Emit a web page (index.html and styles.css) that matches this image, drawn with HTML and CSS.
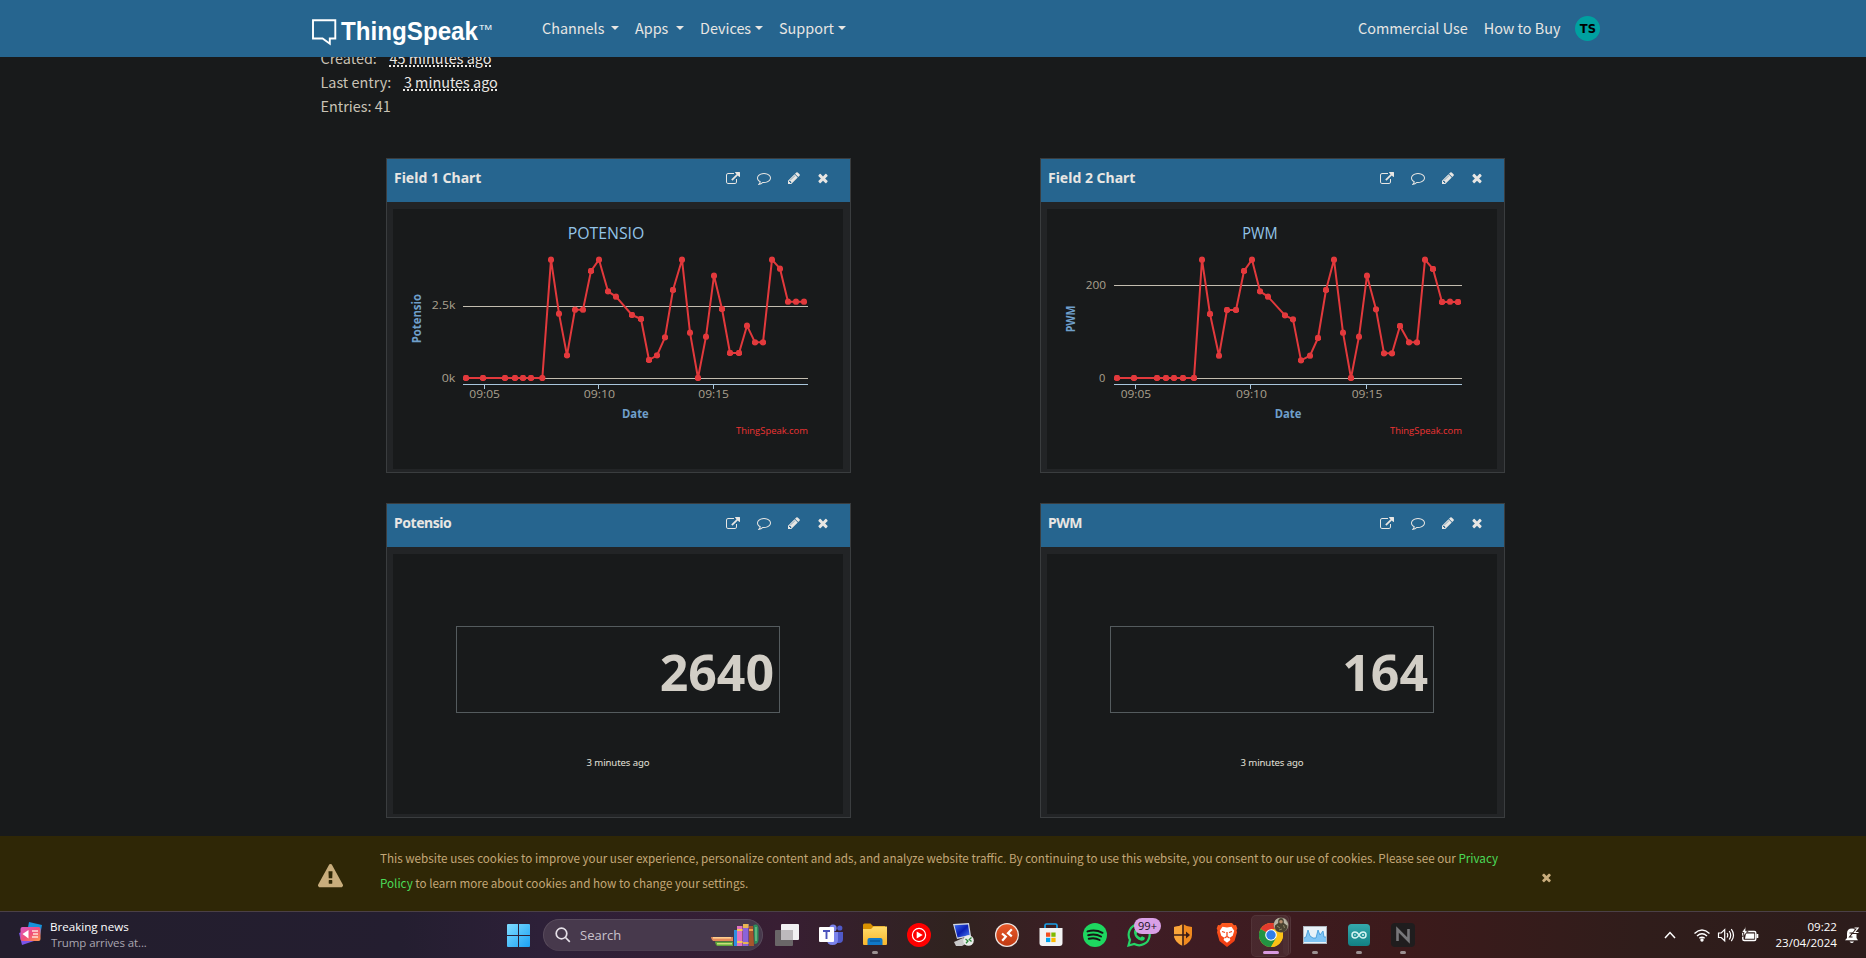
FILE: index.html
```html
<!DOCTYPE html>
<html lang="en">
<head>
<meta charset="utf-8">
<title>ThingSpeak</title>
<link rel="stylesheet" href="styles.css">
</head>
<body>
<svg class="defs" width="0" height="0">
  <defs>
    <symbol id="i-link" viewBox="0 0 1792 1792"><path d="M1408 928v320q0 119-84.5 203.5t-203.5 84.5h-832q-119 0-203.5-84.5t-84.5-203.5v-832q0-119 84.5-203.5t203.5-84.5h704q14 0 23 9t9 23v64q0 14-9 23t-23 9h-704q-66 0-113 47t-47 113v832q0 66 47 113t113 47h832q66 0 113-47t47-113v-320q0-14 9-23t23-9h64q14 0 23 9t9 23zm384-864v512q0 26-19 45t-45 19-45-19l-176-176-652 652q-10 10-23 10t-23-10l-114-114q-10-10-10-23t10-23l652-652-176-176q-19-19-19-45t19-45 45-19h512q26 0 45 19t19 45z"/></symbol>
    <symbol id="i-comment" viewBox="0 0 1792 1792"><path d="M896 384q-204 0-381.5 69.5t-282 187.5-104.5 255q0 112 71.5 213.5t201.5 175.5l87 50-27 96q-24 91-70 172 152-63 275-171l43-38 57 6q69 8 130 8 204 0 381.5-69.5t282-187.5 104.5-255-104.5-255-282-187.5-381.5-69.5zm896 512q0 174-120 321.5t-326 233-450 85.5q-70 0-145-8-198 175-460 242-49 14-114 22h-5q-15 0-27-10.5t-16-27.5v-1q-3-4-.5-12t2-10 4.5-9.5l6-9 7-8.5 8-9q7-8 31-34.5t34.5-38 31-39.5 32.5-51 27-59 26-76q-157-89-247.5-220t-90.5-281q0-174 120-321.5t326-233 450-85.5 450 85.5 326 233 120 321.5z"/></symbol>
    <symbol id="i-pencil" viewBox="0 0 1792 1792"><path d="M491 1536l91-91-235-235-91 91v107h128v128h107zm523-928q0-22-22-22-10 0-17 7l-542 542q-7 7-7 17 0 22 22 22 10 0 17-7l542-542q7-7 7-17zm-54-192l416 416-832 832h-416v-416zm683 96q0 53-37 90l-166 166-416-416 166-165q36-38 90-38 53 0 91 38l235 234q37 39 37 91z"/></symbol>
    <symbol id="i-times" viewBox="0 0 1792 1792"><path d="M1490 1322q0 40-28 68l-136 136q-28 28-68 28t-68-28l-294-294-294 294q-28 28-68 28t-68-28l-136-136q-28-28-28-68t28-68l294-294-294-294q-28-28-28-68t28-68l136-136q28-28 68-28t68 28l294 294 294-294q28-28 68-28t68 28l136 136q28 28 28 68t-28 68l-294 294 294 294q28 28 28 68z"/></symbol>
    <symbol id="i-warn" viewBox="0 0 1792 1792"><path d="M1024 1375v-190q0-14-9.5-23.5t-22.5-9.5h-192q-13 0-22.5 9.5t-9.5 23.5v190q0 14 9.5 23.5t22.5 9.5h192q13 0 22.5-9.5t9.5-23.5zm-2-374l18-459q0-12-10-19-13-11-24-11h-220q-11 0-24 11-10 7-10 21l17 457q0 10 10 16.5t24 6.5h185q14 0 23.5-6.5t10.5-16.5zm-14-934l768 1408q35 63-2 126-17 29-46.5 46t-63.5 17h-1536q-34 0-63.5-17t-46.5-46q-37-63-2-126l768-1408q17-31 47-49t65-18 65 18 47 49z"/></symbol>
    <marker id="dot" viewBox="-10 -10 20 20" markerWidth="20" markerHeight="20" markerUnits="userSpaceOnUse"><circle r="9.500" fill="#e2393c"/></marker>
    <linearGradient id="g-win" x1="0" y1="0" x2="1" y2="1"><stop offset="0" stop-color="#7fdcff"/><stop offset="1" stop-color="#1ba2f5"/></linearGradient>
    <linearGradient id="g-news" x1="0" y1="0" x2="1" y2="1"><stop offset="0" stop-color="#d858c8"/><stop offset=".5" stop-color="#f04f7c"/><stop offset="1" stop-color="#ff9a4d"/></linearGradient>
    <linearGradient id="g-folder" x1="0" y1="0" x2="0" y2="1"><stop offset="0" stop-color="#ffdc6b"/><stop offset="1" stop-color="#f8b62c"/></linearGradient>
    <linearGradient id="g-rdp" x1="0" y1="0" x2="0" y2="1"><stop offset="0" stop-color="#e8592b"/><stop offset="1" stop-color="#c03a12"/></linearGradient>
    <linearGradient id="g-pc" x1="0" y1="0" x2="1" y2="1"><stop offset="0" stop-color="#3c6af0"/><stop offset=".5" stop-color="#0a1fb4"/><stop offset="1" stop-color="#4a7cf4"/></linearGradient>
    <linearGradient id="g-brave" x1="0" y1="0" x2="0" y2="1"><stop offset="0" stop-color="#ff5a1f"/><stop offset="1" stop-color="#ee3a12"/></linearGradient>
    <linearGradient id="g-ard" x1="0" y1="0" x2="0" y2="1"><stop offset="0" stop-color="#34a9ac"/><stop offset="1" stop-color="#128084"/></linearGradient>
  </defs>
</svg>

<nav class="nav">
  <a class="brand">
    <svg class="brand-mark" width="26" height="28" viewBox="0 0 26 28"><path d="M2 2.200h22.300v18.300h-5.500v5.200l-7.200-5.200H2z" fill="none" stroke="#fff" stroke-width="1.900"/></svg>
    <svg class="brand-text" width="152" height="34" viewBox="0 0 152 34"><text x="-1" y="28" class="word" textLength="137" lengthAdjust="spacingAndGlyphs">ThingSpeak</text><text x="137" y="17.500" class="tm" textLength="13" lengthAdjust="spacingAndGlyphs">TM</text></svg>
  </a>
  <div class="menu">
    <a class="item channels">Channels<i class="caret"></i></a>
    <a class="item apps">Apps<i class="caret"></i></a>
    <a class="item devices">Devices<i class="caret"></i></a>
    <a class="item support">Support<i class="caret"></i></a>
  </div>
  <div class="side">
    <a>Commercial Use</a>
    <a>How to Buy</a>
    <span class="avatar">TS</span>
  </div>
</nav>

<main class="page">
  <div class="info">
    <div>Created: <abbr class="ago">45 minutes ago</abbr></div>
    <div>Last entry: <abbr class="ago">3 minutes ago</abbr></div>
    <div>Entries: 41</div>
  </div>
  <div class="cards">
    <section class="card">
      <header class="card-head"><h2>Field 1 Chart</h2><div class="tools"><svg class="t1"><use href="#i-link"/></svg><svg class="t2"><use href="#i-comment"/></svg><svg class="t3"><use href="#i-pencil"/></svg><svg class="t4"><use href="#i-times"/></svg></div></header>
      <div class="card-body">
        <svg class="chart" viewBox="39 177 1350 780">
          <text class="c-title" x="563" y="266" textLength="230" lengthAdjust="spacingAndGlyphs">POTENSIO</text>
          <path class="grid" d="M249 469.500H1284M249 685.500H1284"/>
          <path class="axis" d="M249 703.500H1284M313.500 702V717M655.500 702V717M1000.500 702V717"/>
          <text class="c-lab" x="155" y="477" textLength="71" lengthAdjust="spacingAndGlyphs">2.5k</text>
          <text class="c-lab" x="185" y="696" textLength="41" lengthAdjust="spacingAndGlyphs">0k</text>
          <text class="c-lab" x="268" y="744" textLength="92" lengthAdjust="spacingAndGlyphs">09:05</text>
          <text class="c-lab" x="611" y="744" textLength="94" lengthAdjust="spacingAndGlyphs">09:10</text>
          <text class="c-lab" x="955" y="744" textLength="92" lengthAdjust="spacingAndGlyphs">09:15</text>
          <text class="c-axis" x="726" y="805" textLength="80" lengthAdjust="spacingAndGlyphs">Date</text>
          <text class="c-axis" transform="translate(123 580) rotate(-90)" textLength="148" lengthAdjust="spacingAndGlyphs">Potensio</text>
          <text class="c-credit" x="1068" y="852" textLength="216" lengthAdjust="spacingAndGlyphs">ThingSpeak.com</text>
          <polyline class="series" points="258,684 309,684 375,684 405,684 429,684 453,684 487,684 513,329 537,491 561,616 585,479 609,479 633,363 657,329 684,424 708,440 756,495 783,507 807,630 831,616 855,562 879,420 906,329 930,548 954,684 978,560 1002,377 1026,477 1050,609 1077,609 1101,527 1125,577 1149,577 1176,329 1200,356 1224,455 1248,455 1272,455"/>
        </svg>
      </div>
    </section>
    <section class="card">
      <header class="card-head"><h2>Field 2 Chart</h2><div class="tools"><svg class="t1"><use href="#i-link"/></svg><svg class="t2"><use href="#i-comment"/></svg><svg class="t3"><use href="#i-pencil"/></svg><svg class="t4"><use href="#i-times"/></svg></div></header>
      <div class="card-body">
        <svg class="chart" viewBox="51 177 1350 780">
          <text class="c-title" x="637" y="266" textLength="106" lengthAdjust="spacingAndGlyphs">PWM</text>
          <path class="grid" d="M252 406.500H1296M252 685.500H1296"/>
          <path class="axis" d="M252 703.500H1296M316.500 702V717M661.500 702V717M1009.500 702V717"/>
          <text class="c-lab" x="167" y="417" textLength="61" lengthAdjust="spacingAndGlyphs">200</text>
          <text class="c-lab" x="207" y="696">0</text>
          <text class="c-lab" x="272" y="744" textLength="91" lengthAdjust="spacingAndGlyphs">09:05</text>
          <text class="c-lab" x="618" y="744" textLength="93" lengthAdjust="spacingAndGlyphs">09:10</text>
          <text class="c-lab" x="965" y="744" textLength="92" lengthAdjust="spacingAndGlyphs">09:15</text>
          <text class="c-axis" x="734" y="805" textLength="80" lengthAdjust="spacingAndGlyphs">Date</text>
          <text class="c-axis" transform="translate(136 547) rotate(-90)" textLength="80" lengthAdjust="spacingAndGlyphs">PWM</text>
          <text class="c-credit" x="1080" y="852" textLength="216" lengthAdjust="spacingAndGlyphs">ThingSpeak.com</text>
          <polyline class="series" points="261,684 312,684 381,684 408,684 432,684 459,684 492,684 516,329 540,492 567,617 591,480 618,480 642,363 666,329 690,424 714,440 765,496 789,508 813,631 840,617 864,564 888,420 912,329 939,548 963,684 987,560 1011,377 1038,478 1062,610 1086,610 1110,528 1137,577 1161,577 1185,329 1209,357 1236,456 1260,455 1284,456"/>
        </svg>
      </div>
    </section>
    <section class="card">
      <header class="card-head"><h2 class="tight">Potensio</h2><div class="tools"><svg class="t1"><use href="#i-link"/></svg><svg class="t2"><use href="#i-comment"/></svg><svg class="t3"><use href="#i-pencil"/></svg><svg class="t4"><use href="#i-times"/></svg></div></header>
      <div class="card-body numeric"><div class="value">2640</div><div class="when">3 minutes ago</div></div>
    </section>
    <section class="card">
      <header class="card-head"><h2 class="tight">PWM</h2><div class="tools"><svg class="t1"><use href="#i-link"/></svg><svg class="t2"><use href="#i-comment"/></svg><svg class="t3"><use href="#i-pencil"/></svg><svg class="t4"><use href="#i-times"/></svg></div></header>
      <div class="card-body numeric"><div class="value">164</div><div class="when">3 minutes ago</div></div>
    </section>
  </div>
</main>

<aside class="cookies">
  <svg class="warn"><use href="#i-warn"/></svg>
  <p>This website uses cookies to improve your user experience, personalize content and ads, and analyze website traffic. By continuing to use this website, you consent to our use of cookies. Please see our <a>Privacy<br>Policy</a> to learn more about cookies and how to change your settings.</p>
  <svg class="close"><use href="#i-times"/></svg>
</aside>

<footer class="taskbar">
  <div class="news">
    <svg width="26" height="26" viewBox="0 0 26 26"><path d="M11 1l13 3-2 11-13-3z" fill="#1593dc"/><path d="M1 12l3-1 12 9-12 4z" fill="#7a55e8"/><rect x="2.500" y="6" width="20" height="14" rx="2" fill="url(#g-news)"/><path d="M4.500 13l6-4v8.500z" fill="#fff"/><path d="M14 10h6M15 13h5M14 16h6" stroke="#ffe0d8" stroke-width="1.300"/></svg>
    <div class="news-text"><b>Breaking news</b><span>Trump arrives at...</span></div>
  </div>
  <div class="apps-row">
    <svg class="win" width="23" height="23" viewBox="0 0 23 23" fill="url(#g-win)"><path d="M0 1q0-1 1-1h10v11H0zM12 0h10q1 0 1 1v10H12zM0 12h11v11H1q-1 0-1-1zM12 12h11v10q0 1-1 1H12z"/></svg>
    <div class="search">
      <svg width="16" height="16" viewBox="0 0 16 16" fill="none" stroke="#e6e1e8" stroke-width="1.700"><circle cx="6.500" cy="6.500" r="5.300"/><path d="M10.500 10.500l4.300 4.300"/></svg>
      <span>Search</span>
      <svg class="books" width="50" height="24" viewBox="0 0 50 24"><path d="M1 14h22v4H3q-2-2-2-4z" fill="#e58a5a"/><path d="M3 14h18v1.600H3z" fill="#ffcf8e"/><path d="M5 18.500h18V23H7q-2-2-2-4.500z" fill="#5fa83a"/><path d="M7 20h15v1.500H7z" fill="#c9e07a"/><rect x="24" y="7" width="3" height="16" fill="#2f8fe0"/><rect x="27" y="3" width="5.500" height="20" fill="#e071c2"/><path d="M27 6h5.500v2H27zM27 18h5.500v2H27z" fill="#f7c35a"/><rect x="33" y="1" width="5.500" height="22" fill="#8b63d8"/><path d="M33 1h5.500v4H33zM33 19h5.500v2H33z" fill="#e8b553"/><path d="M39 3h4l1 20h-5z" fill="#a8562c"/><path d="M39 6h4v2h-4z" fill="#f09c4c"/><path d="M43.500 2q5-2 5 4v10q0 5-4 5z" fill="#2e8f5c"/><path d="M46 4v14" stroke="#8fd6a0" stroke-width="1"/></svg>
    </div>
    <div class="slots">
      <div class="slot"><svg viewBox="0 0 24 24"><rect x="6" y="1" width="18" height="16" rx="1" fill="#f1f0f2"/><rect x="0" y="7" width="18" height="16" rx="1" fill="#6a6668"/><rect x="6" y="7" width="12" height="10" fill="#bdbabd"/></svg></div>
      <div class="slot"><svg viewBox="0 0 24 24"><circle cx="14" cy="5.200" r="3.600" fill="#7b83eb"/><circle cx="20.800" cy="5" r="2.600" fill="#5059c9"/><path d="M16 9h8v7q0 4-4 4h-4z" fill="#5059c9"/><path d="M8 9h11v8q0 5-5.500 5T8 17z" fill="#7b83eb"/><rect x="0" y="4" width="15" height="15" rx="1" fill="#fff"/><path d="M4 8h7M7.500 8v8" stroke="#4b53bc" stroke-width="1.900"/></svg></div>
      <div class="slot"><svg viewBox="0 0 24 24"><path d="M0 2q0-1.500 1.500-1.500h6L10 3h12v6H0z" fill="#d99100"/><path d="M0 6h8l2.500-2.500H24V21q0 1-1 1H1q-1 0-1-1z" fill="url(#g-folder)"/><path d="M4.500 22v-5q0-2 2-2h11q2 0 2 2v5z" fill="#0f78c8"/><path d="M7 18h10" stroke="#0a5a9c" stroke-width="1.500"/></svg><i class="dot"></i></div>
      <div class="slot"><svg viewBox="0 0 24 24"><circle cx="12" cy="12" r="12" fill="#f00"/><circle cx="12" cy="12" r="6.600" fill="none" stroke="#fff" stroke-width="1.200"/><path d="M9.700 8.500l6 3.500-6 3.500z" fill="#fff"/></svg></div>
      <div class="slot"><svg viewBox="0 0 24 24"><path d="M2 1l16-1 2 13-14 3z" fill="#cfd6e2"/><path d="M3.500 2.300l13.500-.8 1.600 10.500-12 2.400z" fill="url(#g-pc)"/><path d="M3 19l9-4 6 4-7 4H5z" fill="#c9c9c9"/><circle cx="17.500" cy="17.500" r="5.300" fill="#e9ece9"/><path d="M14.500 16l2.500 2-2 2.300M20.500 14.500l-2.200 2 2.200 2" stroke="#2d8a3a" stroke-width="1.300" fill="none"/></svg></div>
      <div class="slot"><svg viewBox="0 0 24 24"><circle cx="12" cy="12" r="12" fill="#eee7e4"/><circle cx="12" cy="12" r="10.700" fill="url(#g-rdp)"/><path d="M7 10.500l3.800 3.200-3.600 4M16.800 6.200l-3.800 4 3.800 3.200" fill="none" stroke="#fff" stroke-width="2.200"/></svg></div>
      <div class="slot"><svg viewBox="0 0 24 24"><path d="M6 6V2.500Q6 1 7.500 1h9Q18 1 18 2.500V6" fill="none" stroke="#18a0e8" stroke-width="1.700"/><path d="M.500 5h23v15q0 3-3 3h-17q-3 0-3-3z" fill="#f3f3f3"/><path d="M7 9.500h4.300v4.300H7z" fill="#f25022"/><path d="M12.300 9.500h4.300v4.300h-4.300z" fill="#7fba00"/><path d="M7 14.800h4.300v4.300H7z" fill="#00a4ef"/><path d="M12.300 14.800h4.300v4.300h-4.300z" fill="#ffb900"/></svg></div>
      <div class="slot"><svg viewBox="0 0 24 24"><circle cx="12" cy="12" r="12" fill="#1ed760"/><path d="M4.500 8.400q8-2.300 15 1.400M5.200 12.200q7-2 12.800 1.300M5.800 15.800q6-1.600 10.800 1.200" fill="none" stroke="#161616" stroke-width="2" stroke-linecap="round"/></svg></div>
      <div class="slot"><svg viewBox="0 0 24 24"><path d="M1.500 22.500l1.500-5.700A10.500 10.500 0 1 1 7.300 21z" fill="none" stroke="#25d366" stroke-width="2.200"/><path d="M7.300 7.200q1-1.300 2-.4l1.200 2.600-1 1.500q1.300 2.600 4 3.700l1.500-1.400 2.700 1.300q.7 3-3.200 3.200Q8 16.200 7 10z" fill="#25d366"/></svg><span class="badge">99+</span></div>
      <div class="slot"><svg viewBox="0 0 24 24"><path d="M12 1q4 3 9 3v8q0 7-9 11-9-4-9-11V4q5 0 9-3z" fill="#f08a1f"/><path d="M12 1v22Q3 19 3 12V4q5 0 9-3z" fill="#f9a53a"/><path d="M12 1v22M3 12h14" stroke="#3a1c18" stroke-width="1.600"/><path d="M15 8.500l4 3.500-4 3.500z" fill="#3a1c18"/></svg></div>
      <div class="slot"><svg viewBox="0 0 24 24"><path d="M7 0h10l2 2.300 2-.2 1.300 3.300-.8 1.800.5 2L19.500 18 12 24 4.500 18 2 9.200l.5-2-.8-1.800L3 2.100l2 .2z" fill="url(#g-brave)"/><path d="M12 4.500l4.500-.8 2.700 4-1.500 5-3 2 .7 2.300-3.400 2.700-3.400-2.700.7-2.300-3-2-1.500-5 2.700-4z" fill="#fff"/><path d="M7 8.500l3 1M17 8.500l-3 1M12 9v4M9.500 15l2.500-1.500 2.500 1.500" stroke="#f4481a" stroke-width="1.300" fill="none"/></svg></div>
      <div class="slot active"><svg viewBox="0 0 24 24"><circle cx="12" cy="12" r="12" fill="#fbc116"/><path d="M12 12L1.600 6A12 12 0 0 1 22.400 6z" fill="#e33b2e"/><path d="M12 12L1.600 6A12 12 0 0 0 12 24l5.200-9z" fill="#229342"/><path d="M12 12l5.200 3L12 24A12 12 0 0 0 22.400 6H12z" fill="#fbc116"/><circle cx="12" cy="12" r="5.800" fill="#fff"/><circle cx="12" cy="12" r="4.700" fill="#2f7de9"/></svg><svg class="profile" viewBox="0 0 16 16"><circle cx="8" cy="8" r="7.500" fill="#8d8674"/><path d="M1 9q0-7 5-8l6 1 3 5-2 4H2z" fill="#b9b4a4"/><path d="M5.200 6V3.500Q5.500 1 8 1t2.800 2.500V6l3.200 2.500q.5 4.500-3 6.200-3.500 1.200-6.500-.2Q1.500 12.500 2 8.500z" fill="#4a4331"/><circle cx="8" cy="4.800" r="1.800" fill="#b58d6c"/><path d="M4 9l3 2M10.500 8l1 3M6 13l3-1" stroke="#8a8262"/></svg><i class="dot wide"></i></div>
      <div class="slot"><svg viewBox="0 0 24 24"><rect x="0" y="3" width="24" height="18" fill="#aeb7bf"/><rect x="1" y="4" width="22" height="16" fill="#e9f2f8"/><path d="M1 15l2-1 2-7 2 6 3 2 3 0 2-8 2 5 3-4 1 6h2v5H1z" fill="#7fc4f4"/><path d="M1 15l2-1 2-7 2 6 3 2h3l2-8 2 5 3-4 1 6h2" fill="none" stroke="#3a97d8" stroke-width=".8"/></svg><i class="dot"></i></div>
      <div class="slot"><svg viewBox="0 0 24 24"><rect x="1" y="1" width="22" height="22" rx="3.500" fill="url(#g-ard)"/><path d="M12 12q-1.700-3-4-3a3 3 0 0 0 0 6q2.300 0 4-3 1.700-3 4-3a3 3 0 0 1 0 6q-2.300 0-4-3z" fill="none" stroke="#d5f4f2" stroke-width="1.500"/><path d="M7 12h2M15 12h2M16 11v2" stroke="#d5f4f2"/></svg><i class="dot"></i></div>
      <div class="slot"><svg viewBox="0 0 24 24"><rect x="0" y="0" width="24" height="24" rx="4" fill="#1f1d1e"/><path d="M6.500 18V6.500l11 11V6" fill="none" stroke="#77777a" stroke-width="2.600"/></svg><i class="dot"></i></div>
    </div>
  </div>
  <div class="tray">
    <svg width="14" height="14" viewBox="0 0 14 14"><path d="M2 10l5-5.500L12 10" fill="none" stroke="#fff" stroke-width="1.500"/></svg>
    <svg class="wifi" width="18" height="16" viewBox="0 0 18 16" fill="none" stroke="#fff" stroke-width="1.400"><path d="M1.500 6.500q7.500-7 15 0M4 9q5-4.500 10 0M6.300 11.300q2.700-2.300 5.400 0"/><circle cx="9" cy="13" r="1" fill="#fff"/></svg>
    <svg class="vol" width="18" height="16" viewBox="0 0 18 16" fill="none" stroke="#fff" stroke-width="1.200"><path d="M1.500 6v4.500h2.700l3.500 3.300V2.600L4.200 6zM10 6q1.500 2.200 0 4.500M12.200 4q3 4.200 0 8.500M14.300 2.200q4.400 6 0 12"/></svg>
    <svg class="bat" width="18" height="16" viewBox="0 0 18 16"><rect x="1.800" y="4.500" width="13" height="9" rx="1.500" fill="none" stroke="#fff" stroke-width="1.400"/><path d="M5 6.500h8.300v5.200H4z" fill="#fff"/><path d="M15.500 7h1.800v4h-1.800z" fill="#fff"/><path d="M4.800-.5L.6 5.500h2.400L1.600 10l5.600-6H4.800z" fill="#fff" stroke="#2f1d1b" stroke-width=".8"/></svg>
    <div class="clock"><span>09:22</span><span>23/04/2024</span></div>
    <svg class="bell" width="16" height="18" viewBox="0 0 16 18"><path d="M3 12V7.500Q3 2.500 8 2.500T12.500 8v4l1.500 2.200H1z" fill="#fff"/><path d="M5.500 15.500h4.500q-2 3-4.500 0z" fill="#fff"/><path d="M5.500 7h3l-3 4h3" stroke="#2f1d1b" stroke-width="1.100" fill="none"/><path d="M10.500 2h3.500l-3.500 4.500h4" stroke="#2f1d1b" stroke-width="3" fill="none"/><path d="M10.500 2h3.500l-3.500 4.500h4" stroke="#fff" stroke-width="1.200" fill="none"/></svg>
  </div>
</footer>
</body>
</html>
```
FILE: styles.css
```css
* { box-sizing: border-box; }
body {
  margin: 0;
  width: 1866px;
  height: 958px;
  overflow: hidden;
  display: flex;
  flex-direction: column;
  background: #181a1b;
  color: #c9c3b6;
  font-family: "Noto Sans CJK SC", "Open Sans", sans-serif;
  font-size: 14.4px;
}
svg { display: block; flex: none; }
.defs { position: absolute; }

.nav {
  height: 57px;
  flex: none;
  display: flex;
  align-items: center;
  padding-left: 311px;
  background: #26658f;
  color: #e8e6e3;
  line-height: 20px;
  padding-bottom: 1px;
}
.brand { display: flex; width: 231px; align-items: flex-start; padding-top: 4px; }
.brand-mark { margin-top: 3px; }
.brand-text { margin-left: 5px; margin-top: -3px; overflow: visible; }
.word { font: bold 25px "Liberation Sans", Arial, sans-serif; fill: #fff; }
.tm { font: 8px "Liberation Sans", Arial, sans-serif; fill: #fff; }
.menu { display: flex; width: 816px; }
.item { display: flex; align-items: center; justify-content: space-between; white-space: nowrap; }
.channels { width: 77px; margin-right: 16px; }
.apps { width: 49px; margin-right: 16px; }
.devices { width: 63px; margin-right: 16px; }
.support { width: 67px; }
.caret { border: 4px solid transparent; border-top-color: #e8e6e3; border-bottom: 0; }
.side { display: flex; align-items: center; gap: 16px; white-space: nowrap; }
.avatar {
  width: 25px; height: 25px; border-radius: 50%;
  background: #00a0a0; color: #000;
  font: bold 11.5px/26px "DejaVu Sans", "Noto Sans", sans-serif;
  text-align: center;
  margin-left: -1px;
}

.page { height: 779px; flex: none; overflow: hidden; }
.info { margin: -11px 0 0 320.5px; line-height: 24px; height: 72px; }
.ago { margin-left: 9.5px; color: #e8e6e3; text-decoration: underline dotted 2px; text-underline-offset: 1px; }
.cards {
  display: grid;
  grid-template-columns: 465px 465px;
  grid-auto-rows: 315px;
  gap: 30px 189px;
  margin: 40px 0 0 386px;
}
.card { border: 1px solid #3a3d3f; background: #222426; display: flex; flex-direction: column; }
.card-head { height: 43px; background: #26658f; display: flex; justify-content: space-between; padding: 0 20px 0 7px; }
.card-head h2 { margin: 9px 0 0; font: bold 14px/20px "Noto Sans", sans-serif; color: #e8e6e3; white-space: nowrap; }
.card-head .tight { letter-spacing: -.45px; }
.tools { display: flex; padding-top: 12px; fill: #e8e6e3; }
.tools svg { width: 14px; height: 14px; }
.t1 { margin: 1px 17px 0 0; }
.t2 { margin-right: 16px; }
.t3 { margin-right: 15px; }
.card-body { width: 450px; height: 260px; margin: 7px 0 0 6px; background: #181a1b; }
.chart { width: 450px; height: 260px; }
.chart text { font-family: "Open Sans", sans-serif; }
.c-title { font-size: 49px; fill: #93c4e8; }
.c-lab { font-size: 33px; fill: #aaa08e; }
.chart .c-axis { font-size: 36px; font-weight: 700; fill: #6f9fca; }
.c-credit { font-size: 27px; fill: #ee3333; }
.grid { stroke: #c3bdb0; stroke-width: 3; fill: none; }
.axis { stroke: #a9c6dc; stroke-width: 3; fill: none; }
.series { fill: none; stroke: #e2393c; stroke-width: 6; stroke-linejoin: round; marker: url(#dot); }
.numeric { display: flex; flex-direction: column; align-items: center; padding-top: 72px; }
.value {
  width: 324px; height: 87px;
  border: 1px solid #545b5e;
  padding: 2px 5px 0 0;
  text-align: right;
  font: bold 50px/87px "Open Sans", sans-serif;
  color: #d2cec6;
}
.when { margin-top: 42px; font: 9.6px/16px "Noto Sans", sans-serif; color: #e4e1da; letter-spacing: -.12px; }

.cookies {
  height: 75px; flex: none;
  display: flex;
  background: #2f2706;
  color: #c4a878;
  fill: #c9ad7c;
  font-size: 11.65px;
  line-height: 25px;
}
.warn { width: 25px; height: 25px; margin: 28px 37px 0 318px; }
.cookies p { margin: 9px 0 0 0; width: 1151px; white-space: nowrap; }
.cookies a { color: #4bdc58; }
.close { width: 13px; height: 13px; margin: 35px 0 0 9px; }

.taskbar {
  height: 47px; flex: none;
  display: flex;
  border-top: 1px solid #4b4046;
  background: linear-gradient(90deg, #231e2d 0, #241e30 400px, #2d2038 540px, #381e33 780px, #30231f 950px, #3f1d26 1110px, #3c1a1b 1400px, #301d1b 1640px, #2c1c1b 100%);
  font-family: "Open Sans", sans-serif;
}
.news { width: 507px; display: flex; padding: 9px 0 0 18px; }
.news-text { display: flex; flex-direction: column; margin: -2px 0 0 6px; font-size: 12px; line-height: 16px; color: #aaa6b0; }
.news-text b { font-weight: 400; font-size: 11.6px; color: #fff; }
.news-text span { font-size: 11.5px; margin-left: 1px; letter-spacing: -.1px; }
.apps-row { display: flex; width: 1156px; }
.win { margin-top: 12px; }
.search {
  width: 220px; height: 32px; margin: 7px 0 0 13px;
  border-radius: 16px;
  background: #47394c;
  border: 1px solid #584b5c;
  border-bottom-color: #4c3e50;
  display: flex; align-items: center;
  padding-left: 11px;
  font-size: 13px; color: #c9c3cc;
}
.search span { margin-left: 9px; width: 130px; }
.slots { display: flex; margin-left: 2px; }
.slot { width: 44px; height: 46px; position: relative; padding: 11px 10px; }
.slot svg { width: 24px; height: 24px; }
.dot { position: absolute; left: 19px; bottom: 4px; width: 6px; height: 3px; border-radius: 2px; background: #9b9192; }
.dot.wide { left: 14px; width: 16px; background: #d89ae0; }
.active::before { content: ""; position: absolute; left: 2px; top: 3px; width: 36px; height: 40px; border-radius: 5px; background: rgba(255,255,255,.06); border: 1px solid rgba(255,255,255,.05); }
.active::after { content: ""; position: absolute; left: 34px; top: 3px; width: 7px; height: 40px; border-right: 1px solid rgba(255,255,255,.09); border-radius: 4px; background: rgba(255,255,255,.03); }
.active svg { position: relative; }
.slot .profile { position: absolute; left: 24px; top: 5px; width: 16px; height: 16px; z-index: 1; }
.badge {
  position: absolute; left: 17px; top: 6px; width: 27px; height: 16px;
  border-radius: 8px; background: #d9a0e6; color: #201020;
  font: 11px/16px "Open Sans", sans-serif; text-align: center;
}
.tray { display: flex; height: 46px; align-items: center; padding-bottom: 1px; }
.wifi { margin-left: 16px; }
.vol { margin-left: 6px; }
.bat { margin-left: 6px; overflow: visible; }
.clock { width: 78px; display: flex; flex-direction: column; align-items: flex-end; font-size: 11.6px; line-height: 16px; color: #fff; white-space: nowrap; }
.bell { margin-left: 7px; }
```
